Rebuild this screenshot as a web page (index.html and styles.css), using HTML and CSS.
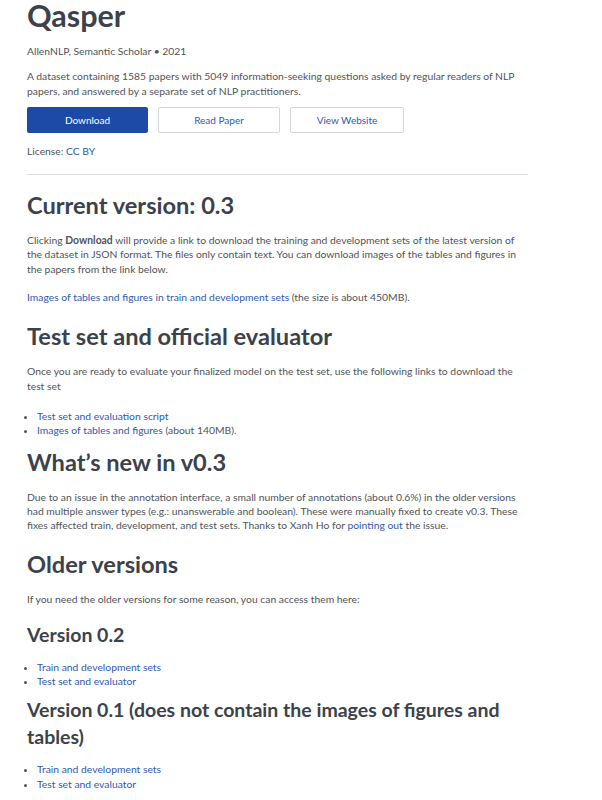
FILE: index.html
```html
<!DOCTYPE html>
<html lang="en">
<head>
<meta charset="utf-8">
<title>Qasper</title>
<link rel="stylesheet" href="styles.css">
</head>
<body>
<main class="page">
  <header class="intro">
    <h1 class="title">Qasper</h1>
    <div class="meta">AllenNLP, Semantic Scholar • 2021</div>
    <p class="desc">A dataset containing 1585 papers with 5049 information-seeking questions asked by regular readers of NLP papers, and answered by a separate set of NLP practitioners.</p>
    <div class="actions">
      <a class="btn btn-primary" href="#">Download</a>
      <a class="btn btn-outline" href="#">Read Paper</a>
      <a class="btn btn-outline" href="#">View Website</a>
    </div>
    <div class="license">License: <a href="#">CC BY</a></div>
  </header>
  <hr class="rule">
  <section class="content">
    <h2>Current version: 0.3</h2>
    <p>Clicking <strong>Download</strong> will provide a link to download the training and development sets of the latest version of the dataset in JSON format. The files only contain text. You can download images of the tables and figures in the papers from the link below.</p>
    <p><a href="#">Images of tables and figures in train and development sets</a> (the size is about 450MB).</p>

    <h2>Test set and official evaluator</h2>
    <p>Once you are ready to evaluate your finalized model on the test set, use the following links to download the test set</p>
    <ul>
      <li><a href="#">Test set and evaluation script</a></li>
      <li><a href="#">Images of tables and figures</a> (about 140MB).</li>
    </ul>

    <h2>What’s new in v0.3</h2>
    <p>Due to an issue in the annotation interface, a small number of annotations (about 0.6%) in the older versions had multiple answer types (e.g.: unanswerable and boolean). These were manually fixed to create v0.3. These fixes affected train, development, and test sets. Thanks to Xanh Ho for <a href="#">pointing out</a> the issue.</p>

    <h2>Older versions</h2>
    <p>If you need the older versions for some reason, you can access them here:</p>
    <h3>Version 0.2</h3>
    <ul>
      <li><a href="#">Train and development sets</a></li>
      <li><a href="#">Test set and evaluator</a></li>
    </ul>
    <h3>Version 0.1 (does not contain the images of figures and tables)</h3>
    <ul>
      <li><a href="#">Train and development sets</a></li>
      <li><a href="#">Test set and evaluator</a></li>
    </ul>
  </section>
</main>
</body>
</html>
```

FILE: styles.css
```css
html, body {
  margin: 0;
  padding: 0;
  background: #ffffff;
}

body {
  font-family: Lato, "Open Sans", "Liberation Sans", sans-serif;
  font-size: 10.35px;
  line-height: 14.3px;
  color: #4f5358;
}

a {
  color: #2f59ad;
  text-decoration: none;
}

.page {
  width: 501px;
  padding-left: 27px;
}

.intro {
  display: flex;
  flex-direction: column;
  gap: 11px;
}

.title {
  margin: -1px 0 0;
  font-size: 30.5px;
  line-height: 32px;
  font-weight: 700;
  color: #3c424b;
}

.meta {
  margin-top: 1.5px;
}

.desc {
  margin: 0.5px 0 0;
}

.actions {
  display: flex;
  gap: 10px;
  margin-top: -1.5px;
}

.btn {
  box-sizing: border-box;
  height: 26px;
  display: flex;
  align-items: center;
  justify-content: center;
  border-radius: 2px;
  font-size: 10px;
}

.btn-primary {
  width: 121px;
  background: #1c4aa6;
  color: #ffffff;
}

.btn-outline {
  border: 1px solid #d3d6da;
  color: #2f59ad;
  background: #ffffff;
}

.actions .btn-outline:nth-child(2) {
  width: 122px;
}

.actions .btn-outline:nth-child(3) {
  width: 114px;
}

.license {
  margin-top: -0.5px;
}

.rule {
  margin: 16px 0 0;
  border: 0;
  border-top: 1px solid #dcdfe2;
  height: 0;
}

.content {
  padding-top: 15px;
}

.content h2 {
  margin: 0 0 13px;
  font-size: 23.6px;
  line-height: 30px;
  font-weight: 700;
  color: #3c424b;
}

.content h2 + p {
  margin-top: 0;
}

.content h3 {
  margin: 0 0 12px;
  font-size: 19.5px;
  line-height: 27px;
  font-weight: 700;
  color: #3c424b;
}

.content p {
  margin: 0 0 14px;
}

.content ul {
  margin: 0 0 9px;
  padding-left: 10px;
}

.content p + h2 {
  margin-top: 17px;
}

.content p + h3 {
  margin-top: 14px;
}

.content p + ul {
  margin-top: 16px;
}

.content ul + h3 {
  margin-top: -1px;
}
```
